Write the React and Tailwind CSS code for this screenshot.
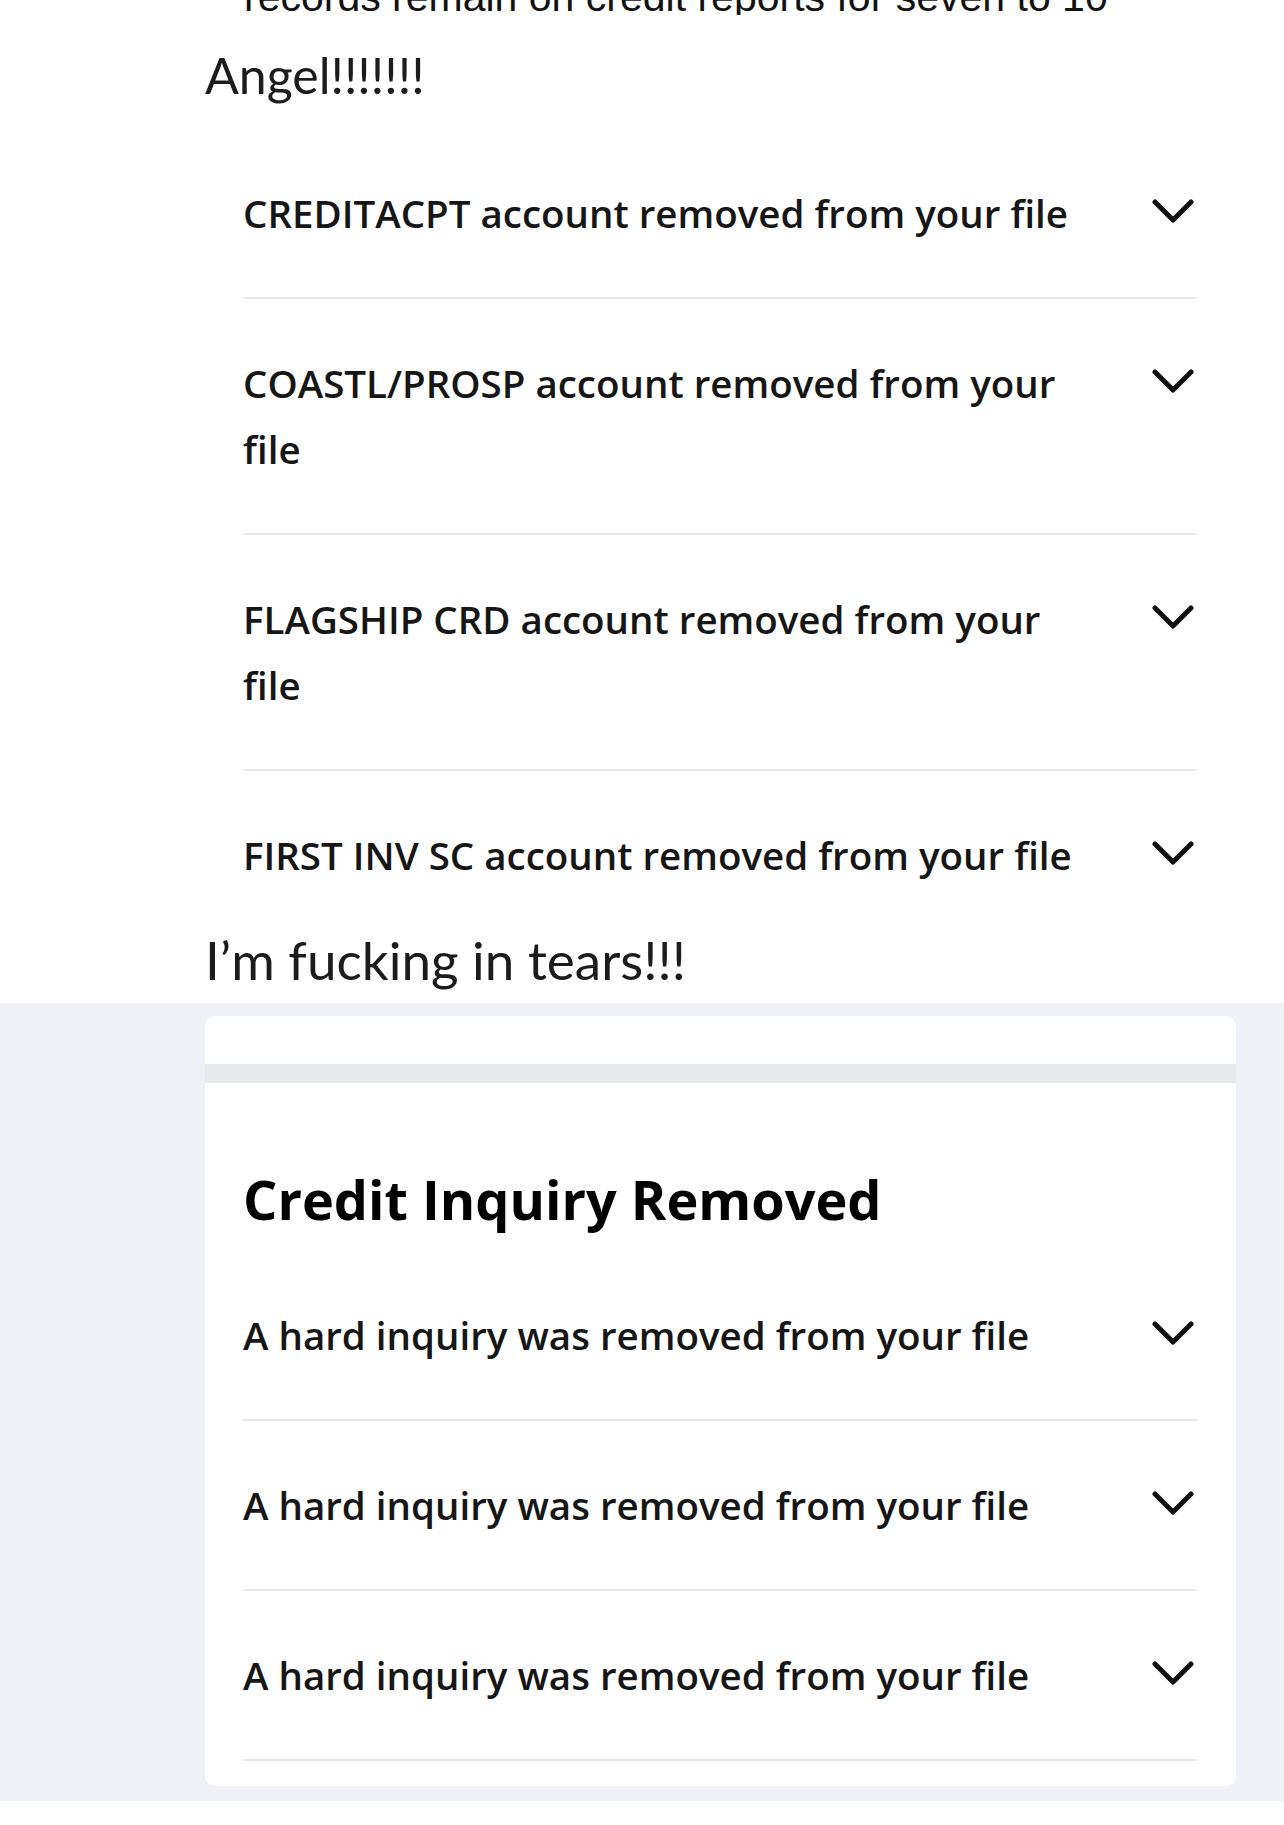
import React from "react";

const accounts = [
  "CREDITACPT account removed from your file",
  "COASTL/PROSP account removed from your file",
  "FLAGSHIP CRD account removed from your file",
  "FIRST INV SC account removed from your file",
];

const inquiries = [
  "A hard inquiry was removed from your file",
  "A hard inquiry was removed from your file",
  "A hard inquiry was removed from your file",
];

function Chevron() {
  return (
    <svg width="42" height="26" viewBox="0 0 42 26" fill="none" className="shrink-0">
      <polyline points="3,4 21,22 39,4" stroke="#111" strokeWidth="5" strokeLinecap="round" strokeLinejoin="round" />
    </svg>
  );
}

function Row({ text, divider = true }) {
  return (
    <div className={`flex items-start justify-between pt-[51px] pb-[51px] ${divider ? "border-b-2 border-[#e6e6e8]" : ""}`}>
      <p className="w-[836px] text-[38.5px] leading-[66px] font-semibold text-[#161616]"
        style={{ fontFamily: "'Open Sans', 'Noto Sans', sans-serif" }}>
        {text}
      </p>
      <div className="h-[66px] flex items-center pr-[3px] -mt-[2px]">
        <Chevron />
      </div>
    </div>
  );
}

export default function App() {
  return (
    <div className="w-[1284px] min-h-[1825px] bg-white" style={{ fontFamily: "'Open Sans', sans-serif" }}>
      {/* top: cut text + post */}
      <div className="h-[15px] overflow-hidden pl-[244px]">
        <p className="text-[41px] leading-[40px] -mt-[23px] text-[#111] whitespace-nowrap"
          style={{ fontFamily: "'Liberation Sans', sans-serif" }}>
          records remain on credit reports for seven to 10
        </p>
      </div>
      <p className="pl-[205px] mt-[27px] text-[50px] leading-[66px] font-normal text-[#1c1c1e]"
        style={{ fontFamily: "Lato, sans-serif" }}>
        Angel!!!!!!!
      </p>

      <div className="ml-[243px] w-[954px] mt-[21px]">
        {accounts.map((t, i) => (
          <Row key={i} text={t} divider={i < accounts.length - 1} />
        ))}
      </div>

      <p className="pl-[205px] -mt-[12px] text-[53px] leading-[66px] font-normal text-[#1c1c1e]"
        style={{ fontFamily: "Lato, sans-serif" }}>
        I’m fucking in tears!!!
      </p>

      <div className="mt-[10px] bg-[#f0f1f6] pt-[13px] pb-[15px] pl-[205px] pr-[48px]">
        <div className="bg-white rounded-[10px] overflow-hidden">
          <div className="h-[48px]" />
          <div className="h-[19px] bg-[#e8e9ed]" />
          <div className="pl-[38px] pr-[39px] pt-[86px] pb-[25px]">
            <h2 className="text-[54px] leading-[60px] font-bold text-black mb-[22px]"
              style={{ fontFamily: "'Open Sans', sans-serif" }}>
              Credit Inquiry Removed
            </h2>
            <div>
              {inquiries.map((t, i) => (
                <Row key={i} text={t} />
              ))}
            </div>
          </div>
        </div>
      </div>
    </div>
  );
}
